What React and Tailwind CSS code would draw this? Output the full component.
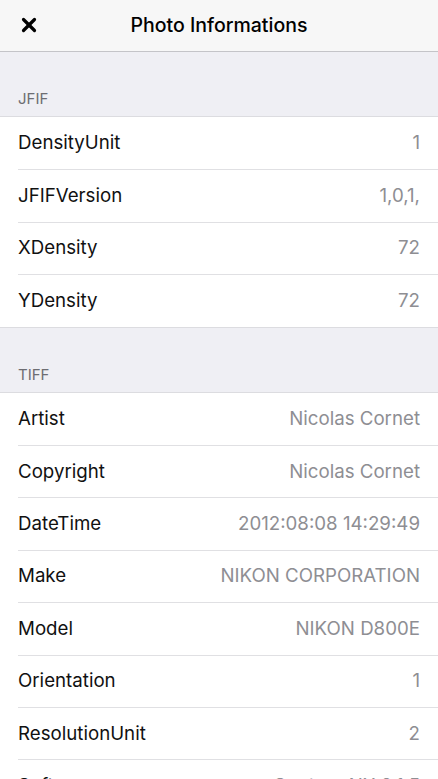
import { X } from 'lucide-react';

const SECTIONS = [
  {
    title: 'JFIF',
    rows: [
      ['DensityUnit', '1'],
      ['JFIFVersion', '1,0,1,'],
      ['XDensity', '72'],
      ['YDensity', '72'],
    ],
  },
  {
    title: 'TIFF',
    rows: [
      ['Artist', 'Nicolas Cornet'],
      ['Copyright', 'Nicolas Cornet'],
      ['DateTime', '2012:08:08 14:29:49'],
      ['Make', 'NIKON CORPORATION'],
      ['Model', 'NIKON D800E'],
      ['Orientation', '1'],
      ['ResolutionUnit', '2'],
      ['Software', 'Capture NX 2.1.5'],
    ],
  },
];

function Row({ label, value, first }) {
  return (
    <div className="bg-white pl-[18px]">
      <div className={`h-[52.4px] flex items-center justify-between pr-[18px] ${first ? '' : 'border-t border-[#e0e0e3]'}`}>
        <span className="text-[18.7px] text-[#111]">{label}</span>
        <span className="text-[18.7px] text-[#8e8e93]">{value}</span>
      </div>
    </div>
  );
}

export default function App() {
  return (
    <div className="w-[438px] h-[779px] overflow-hidden bg-[#efeff4]" style={{ fontFamily: 'Inter, "Noto Sans", sans-serif' }}>
      {/* Nav bar */}
      <div className="relative h-[52px] bg-[#f7f7f7] border-b border-[#c4c4c8] flex items-center justify-center">
        <button className="absolute left-[18px] top-[14px]">
          <X className="w-[22px] h-[22px] text-black" strokeWidth={3.5} />
        </button>
        <h1 className="text-[19.5px] font-medium text-black pt-[1px]">Photo Informations</h1>
      </div>

      {SECTIONS.map(section => (
        <div key={section.title}>
          <div className="h-[65px] flex items-end pl-[18px] pb-[6px] border-b border-[#dcdce0]">
            <span className="text-[15px] leading-[22px] text-[#6d6d72]">{section.title}</span>
          </div>
          {section.rows.map(([label, value], i) => (
            <Row key={label} label={label} value={value} first={i === 0} />
          ))}
          <div className="border-t border-[#dcdce0]" />
        </div>
      ))}
    </div>
  );
}
